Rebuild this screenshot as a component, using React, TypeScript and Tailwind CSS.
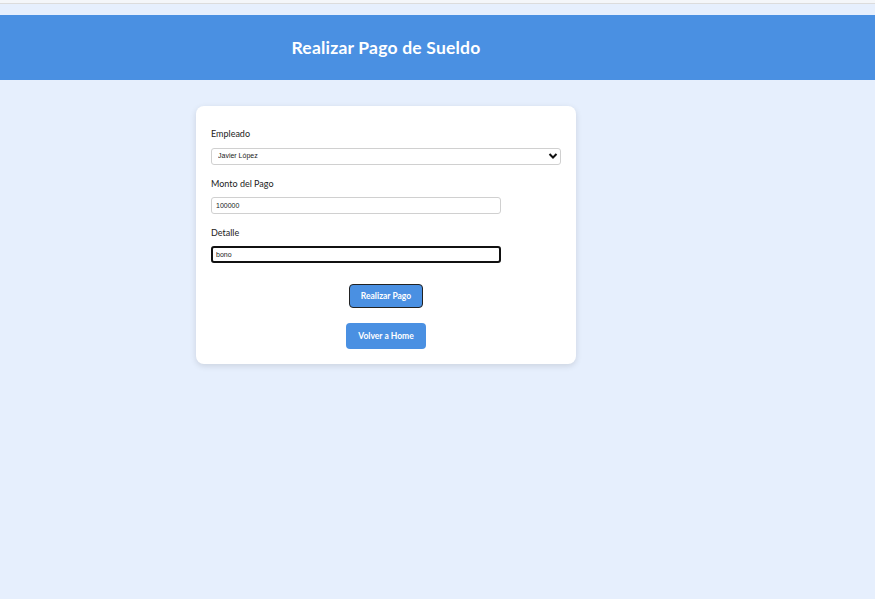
import { useState } from 'react';

export default function App() {
  const [empleado, setEmpleado] = useState('Javier López');
  const [monto, setMonto] = useState('100000');
  const [detalle, setDetalle] = useState('bono');

  return (
    <div className="min-h-[599px] bg-[#e6effd] font-['Lato',_'Noto_Sans',sans-serif] text-[#222]">
      <div className="h-[4px] bg-[#f4f6f9] border-b border-[#dcdcdc]" />
      <header className="mt-[11px] h-[65px] bg-[#4a90e2] flex items-center">
        <div className="ml-[196px] w-[380px] text-center pt-[2px]">
          <h1 className="text-[17.5px] font-bold text-white tracking-[0.2px]">Realizar Pago de Sueldo</h1>
        </div>
      </header>

      <div className="ml-[196px] mt-[26px] w-[380px] bg-white rounded-[8px] shadow-[0_2px_6px_rgba(0,0,0,0.12)] px-[15px] pt-[22px] pb-[15px]">
        <label className="block text-[9px] leading-[12px] h-[12px]">Empleado</label>
        <div className="relative mt-[8px] w-[350px] h-[17px]">
          <select
            value={empleado}
            onChange={(e) => setEmpleado(e.target.value)}
            className="block appearance-none w-full h-[17px] border border-[#d0d0d0] rounded-[3px] bg-white pl-[6px] text-[7px] font-['Liberation_Sans',sans-serif] outline-none"
          >
            <option>Javier López</option>
            <option>María García</option>
          </select>
          <svg className="absolute right-[3px] top-[4px] pointer-events-none" width="10" height="8" viewBox="0 0 10 8">
            <path d="M1.5 2 L5 5.5 L8.5 2" stroke="#111" strokeWidth="2" fill="none" />
          </svg>
        </div>

        <label className="block mt-[13px] text-[9px] leading-[12px] h-[12px]">Monto del Pago</label>
        <input
          value={monto}
          onChange={(e) => setMonto(e.target.value)}
          className="block mt-[7px] w-[290px] h-[17px] border border-[#d0d0d0] rounded-[3px] px-[4px] text-[7px] font-['Liberation_Sans',sans-serif] outline-none"
        />

        <label className="block mt-[13px] text-[9px] leading-[12px] h-[12px]">Detalle</label>
        <input
          value={detalle}
          onChange={(e) => setDetalle(e.target.value)}
          className="block mt-[7px] w-[290px] h-[17px] border-2 border-[#111] rounded-[3px] px-[3px] text-[7px] font-['Liberation_Sans',sans-serif] outline-none"
        />

        <div className="flex flex-col items-center mt-[21px]">
          <button className="w-[74px] h-[24px] bg-[#4a90e2] text-white text-[8.5px] font-bold rounded-[4px] border border-[#222]">
            Realizar Pago
          </button>
          <button className="mt-[15px] w-[80px] h-[26px] bg-[#4a90e2] text-white text-[8.5px] font-bold rounded-[4px]">
            Volver a Home
          </button>
        </div>
      </div>
    </div>
  );
}
